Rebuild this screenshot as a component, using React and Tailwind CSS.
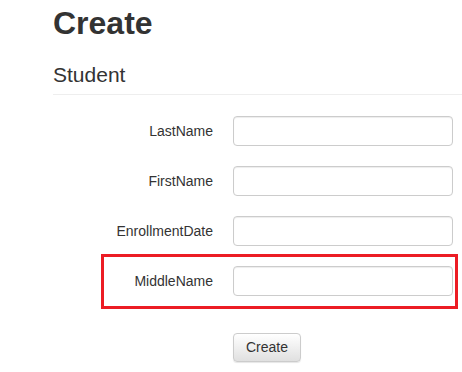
const fields = ["LastName", "FirstName", "EnrollmentDate", "MiddleName"];

const Field = ({ label, marked }) => (
  <div className="relative flex items-center w-[400px] h-[30px] mb-[20px]">
    {marked && (
      <div className="absolute left-[48px] -right-[5px] -top-[12px] -bottom-[13px] border-[3px] border-[#ec1c24]"></div>
    )}
    <label className="w-[160px] text-right text-[14px] text-[#333]">{label}</label>
    <input
      type="text"
      className="ml-[20px] w-[220px] h-[30px] bg-white border border-[#ccc] rounded-[4px] shadow-[inset_0_1px_1px_rgba(0,0,0,0.075)] outline-none"
    />
  </div>
);

const App = () => {
  return (
    <div className="w-[462px] h-[372px] bg-white overflow-hidden pl-[53px] font-['Liberation_Sans',Arial,sans-serif] text-[#333]">
      <h2 className="text-[32px] font-bold leading-[1.1] mt-[6px]">Create</h2>
      <h4 className="text-[21px] leading-[1.1] mt-[22px]">Student</h4>
      <hr className="mt-[8px] border-t border-[#eee]" />

      <div className="mt-[21px]">
        {fields.map((f) => (
          <Field key={f} label={f} marked={f === "MiddleName"} />
        ))}
      </div>

      <div className="pl-[180px] pt-[17px]">
        <button className="h-[29px] px-[12px] text-[14px] text-[#333] border border-[#ccc] rounded-[4px] bg-gradient-to-b from-white to-[#e0e0e0] shadow-[0_1px_1px_rgba(0,0,0,0.1)]">
          Create
        </button>
      </div>
    </div>
  );
};

export default App;
